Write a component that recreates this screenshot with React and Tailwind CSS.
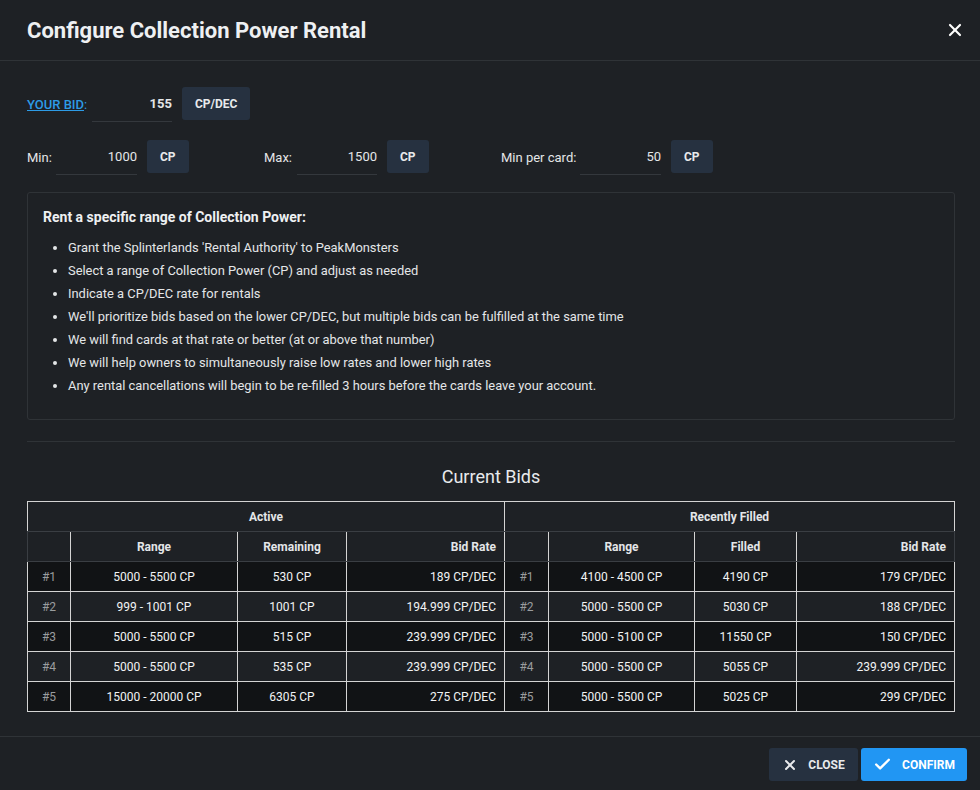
import { X, Check } from 'lucide-react'

const active = [
  ['#1', '5000 - 5500 CP', '530 CP', '189 CP/DEC'],
  ['#2', '999 - 1001 CP', '1001 CP', '194.999 CP/DEC'],
  ['#3', '5000 - 5500 CP', '515 CP', '239.999 CP/DEC'],
  ['#4', '5000 - 5500 CP', '535 CP', '239.999 CP/DEC'],
  ['#5', '15000 - 20000 CP', '6305 CP', '275 CP/DEC'],
]

const filled = [
  ['#1', '4100 - 4500 CP', '4190 CP', '179 CP/DEC'],
  ['#2', '5000 - 5500 CP', '5030 CP', '188 CP/DEC'],
  ['#3', '5000 - 5100 CP', '11550 CP', '150 CP/DEC'],
  ['#4', '5000 - 5500 CP', '5055 CP', '239.999 CP/DEC'],
  ['#5', '5000 - 5500 CP', '5025 CP', '299 CP/DEC'],
]

const tips = [
  "Grant the Splinterlands 'Rental Authority' to PeakMonsters",
  'Select a range of Collection Power (CP) and adjust as needed',
  'Indicate a CP/DEC rate for rentals',
  "We'll prioritize bids based on the lower CP/DEC, but multiple bids can be fulfilled at the same time",
  'We will find cards at that rate or better (at or above that number)',
  'We will help owners to simultaneously raise low rates and lower high rates',
  'Any rental cancellations will begin to be re-filled 3 hours before the cards leave your account.',
]

function Field({ label, value, unit, inputW, labelW, bold }) {
  return (
    <div className="flex items-start">
      <div className={`h-[35px] flex items-center ${labelW}`}>{label}</div>
      <div className={`h-[35px] ${inputW} border-b border-[#34383d] flex items-center justify-end ${bold ? 'font-bold' : ''}`}>{value}</div>
      <div className="ml-[10px] h-[33px] px-[13px] flex items-center rounded-[3px] bg-[#263140] font-bold text-[12px] text-[#e8eaec]">{unit}</div>
    </div>
  )
}

export default function App() {
  const td = 'border border-[#d4d4d4] h-[30px] px-[8px] text-[12px]'
  return (
    <div className="w-[980px] h-[790px] bg-[#1e2125] text-[#e4e6e8] text-[13px] flex flex-col" style={{ fontFamily: 'Roboto, "Liberation Sans", sans-serif' }}>
      {/* Header */}
      <div className="h-[61px] shrink-0 flex items-center justify-between pl-[27px] pr-[15px] border-b border-[#2f3337]">
        <h1 className="text-[22px] font-bold text-[#eef0f2]">Configure Collection Power Rental</h1>
        <X className="w-[20px] h-[20px] text-white" strokeWidth={2.6} />
      </div>

      {/* Body */}
      <div className="flex-1 pl-[27px] pr-[25px] pt-[26px]">
        <div className="flex items-start">
          <div className="h-[35px] flex items-center w-[65px]">
            <span className="text-[#2d9be6] underline font-medium">YOUR BID</span><span className="text-[#2d9be6]">:</span>
          </div>
          <div className="h-[35px] w-[80px] border-b border-[#34383d] flex items-center justify-end font-bold">155</div>
          <div className="ml-[10px] h-[33px] px-[13px] flex items-center rounded-[3px] bg-[#263140] font-bold text-[12px] text-[#e8eaec]">CP/DEC</div>
        </div>

        <div className="mt-[18px] grid grid-cols-[237px_237px_237px]">
          <Field label="Min:" value="1000" unit="CP" labelW="w-[29px]" inputW="w-[81px]" />
          <Field label="Max:" value="1500" unit="CP" labelW="w-[33px]" inputW="w-[80px]" />
          <Field label="Min per card:" value="50" unit="CP" labelW="w-[79px]" inputW="w-[81px]" />
        </div>

        <div className="mt-[17px] border border-[#2f3337] rounded-[3px] px-[15px] pt-[14px] pb-[22px]">
          <div className="text-[14px] font-bold leading-[20px] text-[#eef0f2]">Rent a specific range of Collection Power:</div>
          <ul className="mt-[9px] list-disc pl-[25px] text-[12.9px]">
            {tips.map((t, i) => (
              <li key={i} className="leading-[23px]">{t}</li>
            ))}
          </ul>
        </div>

        <div className="mt-[21px] border-t border-[#2f3337]" />

        <div className="mt-[23px] text-center text-[18px] leading-[24px] text-[#e8eaec]">Current Bids</div>

        <table className="mt-[12px] w-full border-collapse">
          <thead>
            <tr className="font-bold">
              <th colSpan={4} className={`${td} border-b-[#3a3e43] text-center`}>Active</th>
              <th colSpan={4} className={`${td} border-b-[#3a3e43] text-center`}>Recently Filled</th>
            </tr>
            <tr className="font-bold">
              <th className={`${td} w-[43px] border-t-[#3a3e43] border-b-[#3a3e43] border-l-[#3a3e43]`}></th>
              <th className={`${td} w-[167px] border-t-[#3a3e43] border-b-[#3a3e43] text-center`}>Range</th>
              <th className={`${td} w-[109px] border-t-[#3a3e43] border-b-[#3a3e43] text-center`}>Remaining</th>
              <th className={`${td} w-[158px] border-t-[#3a3e43] border-b-[#3a3e43] text-right`}>Bid Rate</th>
              <th className={`${td} w-[44px] border-t-[#3a3e43] border-b-[#3a3e43]`}></th>
              <th className={`${td} w-[146px] border-t-[#3a3e43] border-b-[#3a3e43] text-center`}>Range</th>
              <th className={`${td} w-[102px] border-t-[#3a3e43] border-b-[#3a3e43] text-center`}>Filled</th>
              <th className={`${td} border-t-[#3a3e43] border-b-[#3a3e43] border-r-[#3a3e43] text-right`}>Bid Rate</th>
            </tr>
          </thead>
          <tbody className="text-[#f2f3f4]">
            {active.map((a, i) => {
              const f = filled[i]
              const bg = i % 2 === 0 ? 'bg-[#111315]' : 'bg-[#1e2125]'
              return (
                <tr key={i} className={bg}>
                  <td className={`${td} text-center text-[#9a9c9e]`}>{a[0]}</td>
                  <td className={`${td} text-center`}>{a[1]}</td>
                  <td className={`${td} text-center`}>{a[2]}</td>
                  <td className={`${td} text-right`}>{a[3]}</td>
                  <td className={`${td} text-center text-[#9a9c9e]`}>{f[0]}</td>
                  <td className={`${td} text-center`}>{f[1]}</td>
                  <td className={`${td} text-center`}>{f[2]}</td>
                  <td className={`${td} text-right`}>{f[3]}</td>
                </tr>
              )
            })}
          </tbody>
        </table>
      </div>

      {/* Footer */}
      <div className="h-[54px] shrink-0 border-t border-[#2f3337] flex items-start justify-end gap-[3px] pt-[11px] pr-[13px]">
        <button className="h-[33px] w-[89px] flex items-center justify-center gap-[10px] rounded-[3px] bg-[#263140] text-[12px] font-bold text-[#e8eaec]">
          <X className="w-[16px] h-[16px]" strokeWidth={3} /> CLOSE
        </button>
        <button className="h-[33px] w-[106px] flex items-center justify-center gap-[10px] rounded-[3px] bg-[#2196f3] text-[12px] font-bold text-white">
          <Check className="w-[19px] h-[19px]" strokeWidth={3} /> CONFIRM
        </button>
      </div>
    </div>
  )
}
